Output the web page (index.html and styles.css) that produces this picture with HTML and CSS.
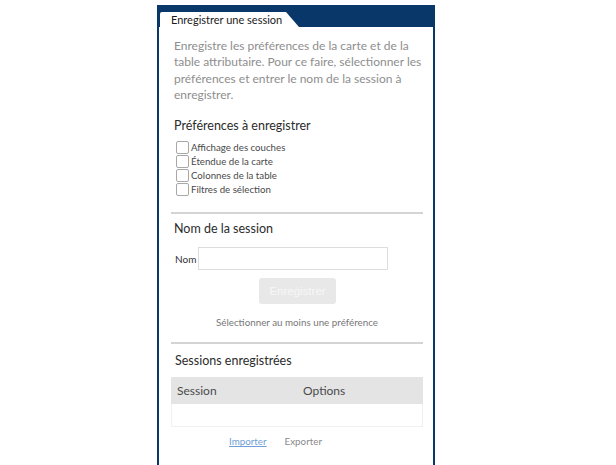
FILE: index.html
```html
<!DOCTYPE html>
<html lang="fr">
<head>
<meta charset="utf-8">
<link rel="stylesheet" href="styles.css">
</head>
<body>
<div class="page">
  <div class="panel">
    <div class="bar">
      <div class="tab">Enregistrer une session</div>
    </div>
    <div class="content">
      <p class="desc">Enregistre les préférences de la carte et de la table attributaire. Pour ce faire, sélectionner les préférences et entrer le nom de la session à enregistrer.</p>
      <div class="title t-prefs">Préférences à enregistrer</div>
      <ul class="checks">
        <li><span class="box"></span><span>Affichage des couches</span></li>
        <li><span class="box"></span><span>Étendue de la carte</span></li>
        <li><span class="box"></span><span>Colonnes de la table</span></li>
        <li><span class="box"></span><span>Filtres de sélection</span></li>
      </ul>
      <div class="rule r1"></div>
      <div class="title t-name">Nom de la session</div>
      <div class="field">
        <label class="lbl">Nom</label>
        <div class="input"></div>
      </div>
      <div class="btn-row"><div class="btn">Enregistrer</div></div>
      <div class="msg">Sélectionner au moins une préférence</div>
      <div class="rule r2"></div>
      <div class="title t-sess">Sessions enregistrées</div>
      <div class="table">
        <div class="thead"><span class="c1">Session</span><span class="c2">Options</span></div>
        <div class="trow"></div>
      </div>
      <div class="links"><span class="link">Importer</span><span class="link off">Exporter</span></div>
    </div>
  </div>
</div>
</body>
</html>
```
FILE: styles.css
```css
html, body { margin: 0; padding: 0; background: #fff; }
body { font-family: Lato, "Open Sans", sans-serif; color: #333; }
.page { padding: 5px 0 0 157px; height: 460px; overflow: hidden; }
.panel { width: 274px; border-left: 2px solid #0a3769; border-right: 2px solid #0a3769; height: 470px; background: #fff; }
.bar { height: 22px; background: #0a3769; margin: 0 -2px; padding: 7px 0 0 3px; box-sizing: border-box; }
.tab { width: 139px; height: 15px; background: #fff; clip-path: polygon(0 0, 126px 0, 139px 100%, 0 100%); border-top-left-radius: 2px; font-size: 11px; line-height: 16px; padding-left: 11px; box-sizing: border-box; color: #1a1a1a; }
.content { padding: 0 10px 0 12px; }
.desc { margin: 11px 0 0 3px; font-size: 12px; line-height: 16.3px; color: #8e8e8e; }
.title { font-size: 12.5px; line-height: 16px; color: #2b2b2b; margin-left: 3px; }
.t-prefs { margin-top: 15px; }
.checks { list-style: none; margin: 7px 0 0 5px; padding: 0; }
.checks li { height: 14px; display: flex; align-items: flex-start; font-size: 9.7px; line-height: 12px; color: #4a4a4a; }
.box { width: 11px; height: 11px; border: 1px solid #a8a8a8; border-radius: 2px; margin-right: 2px; background: #fff; flex: none; }
.rule { height: 2px; background: #d4d4d4; }
.r1 { margin-top: 15px; }
.t-name { margin-top: 7px; }
.field { display: flex; align-items: center; margin-top: 10px; margin-left: 4px; }
.lbl { font-size: 10px; color: #333; margin-right: 2px; }
.input { width: 188px; height: 21px; border: 1px solid #ddd; background: #fff; }
.btn-row { display: flex; margin-top: 8px; padding-left: 88px; }
.btn { width: 77px; height: 26px; border-radius: 3px; background: #e8e8e8; color: #f7f7f7; font-family: "Liberation Sans", Arial, sans-serif; font-size: 11.5px; line-height: 26px; text-align: center; }
.msg { text-align: center; font-size: 9.8px; line-height: 14px; color: #777; margin-top: 11px; }
.r2 { margin-top: 13px; }
.t-sess { margin-top: 9px; margin-left: 4px; }
.table { margin-top: 8px; border: 1px solid #eef0f4; border-top: none; }
.thead { height: 27px; background: #e4e4e4; display: flex; align-items: center; font-size: 12px; color: #4a4a4a; margin: 0 -1px; }
.c1 { width: 126px; padding-left: 6px; }
.trow { height: 22px; background: #fff; }
.links { display: flex; gap: 18px; padding-left: 58px; margin-top: 7px; font-size: 9.8px; line-height: 14px; }
.link { color: #6f9fd6; text-decoration: underline; }
.link.off { color: #8a8a8a; text-decoration: none; }
```
